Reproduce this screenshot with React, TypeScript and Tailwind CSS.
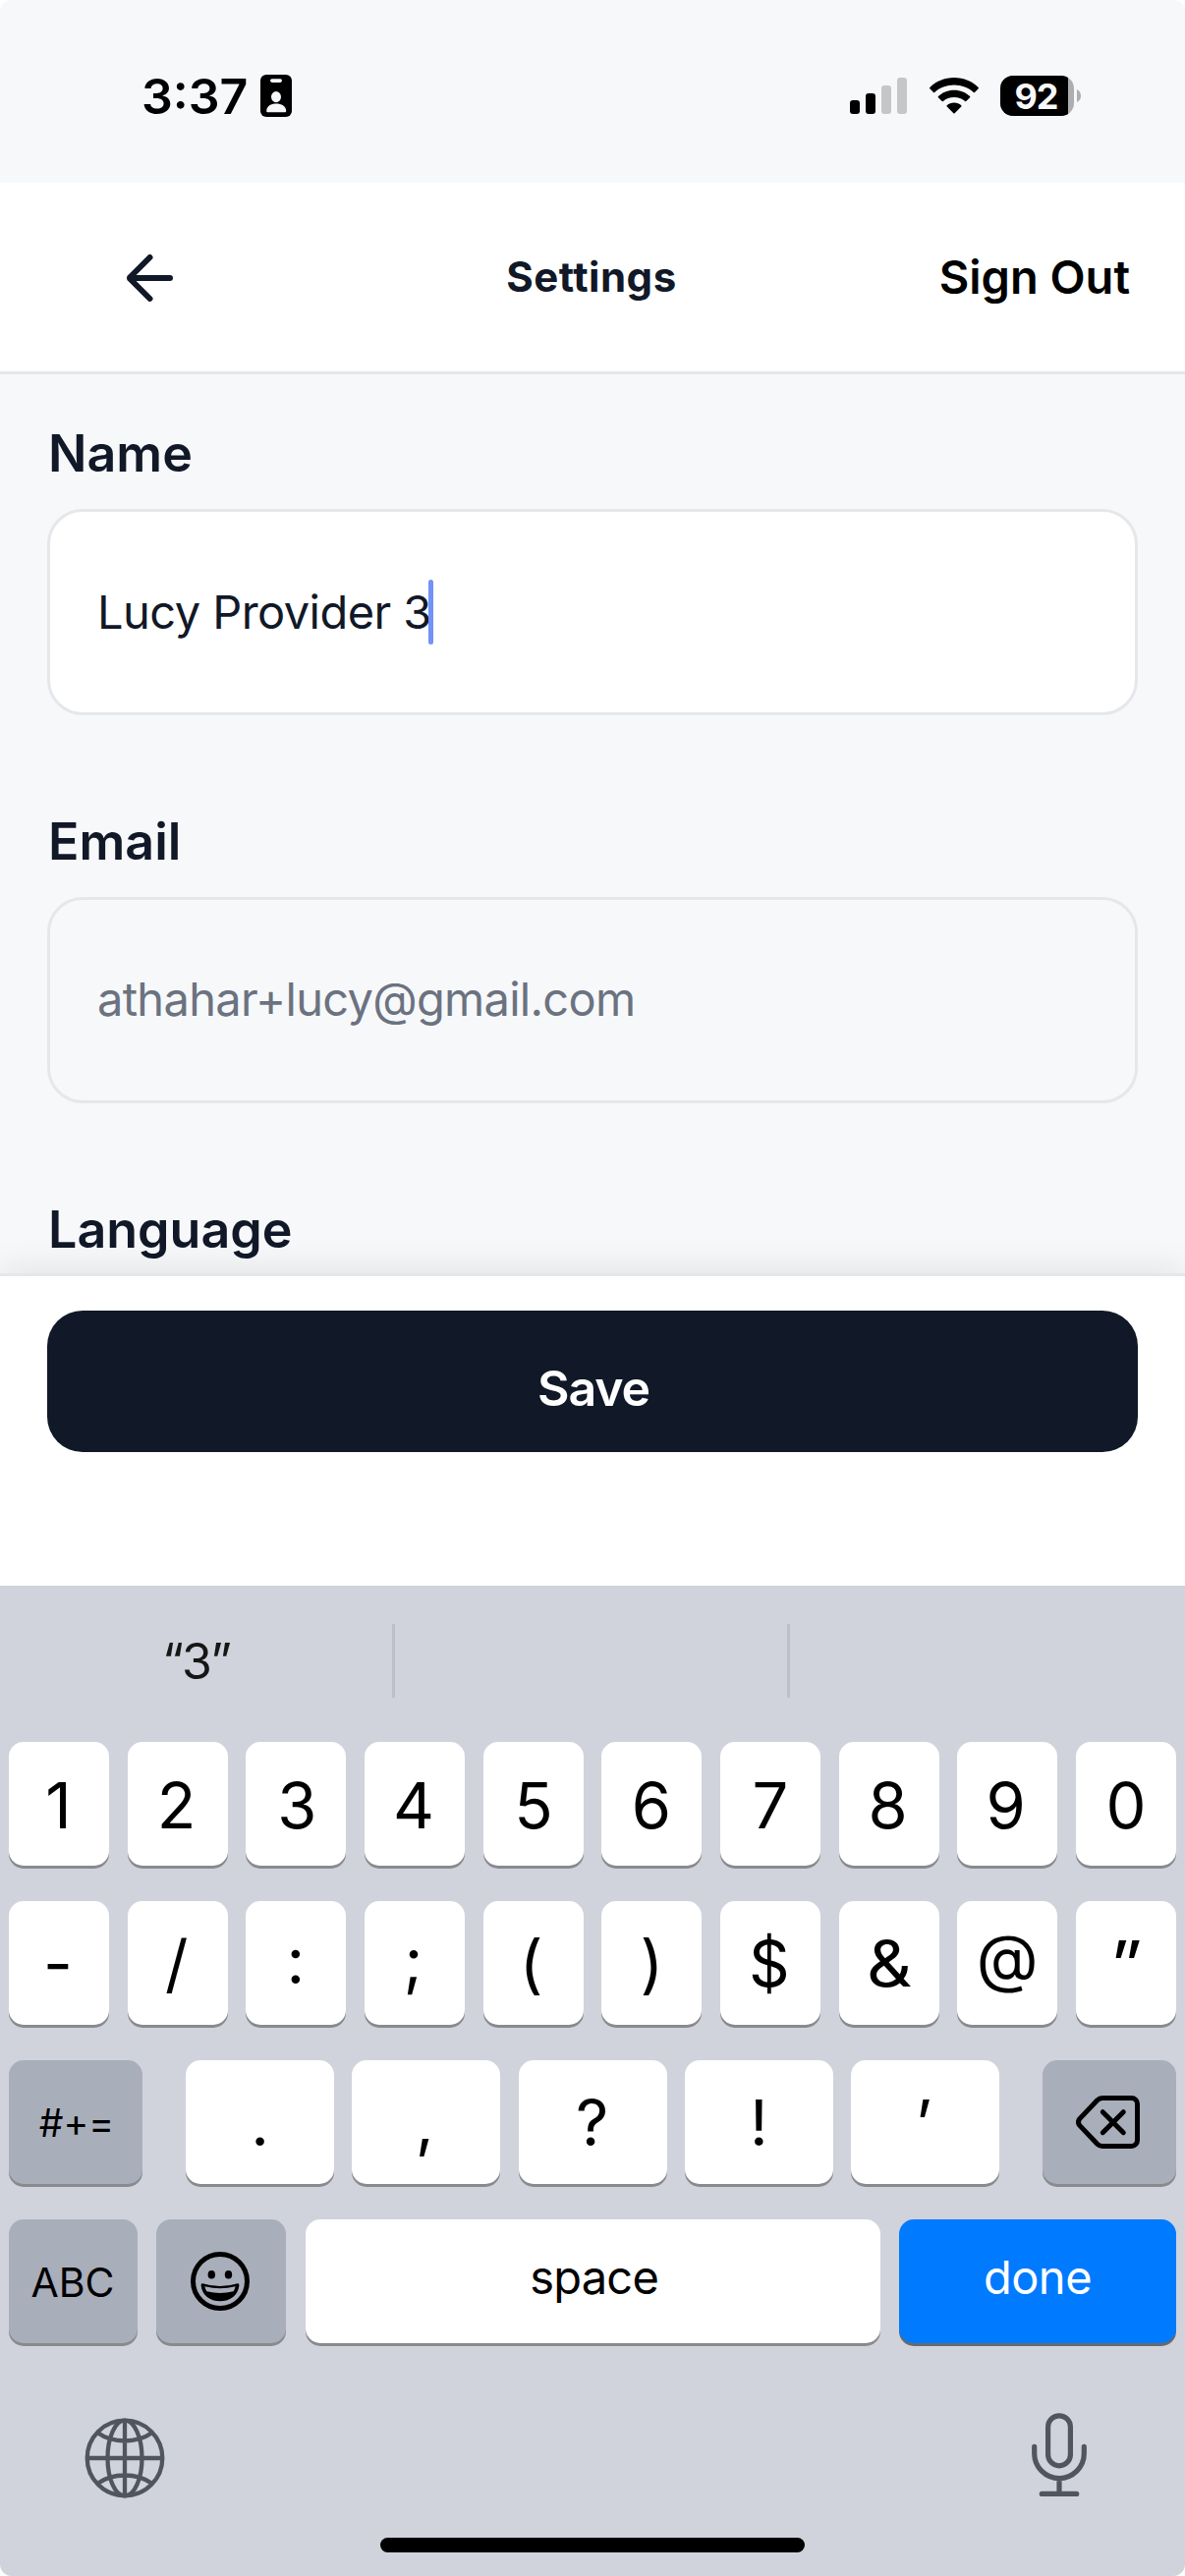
import type { ReactNode } from 'react';

function StatusBar() {
  return (
    <div className="flex h-[186px] items-center justify-between pt-[9px] pr-[106px] pl-[144px]">
      <div className="flex items-center gap-[13px]">
        <span className="text-[50px] leading-none font-semibold text-black">3:37</span>
        <svg width="32" height="43" viewBox="0 0 32 43">
          <rect width="32" height="43" rx="6" fill="#000" />
          <rect x="10" y="4.3" width="12" height="3.6" rx="1.8" fill="#f7f8fa" />
          <ellipse cx="16" cy="22.6" rx="5" ry="5.6" fill="#f7f8fa" />
          <path d="M6.2 37.2C6.2 32 11 29.6 16.1 29.6S26.2 32 26.2 37.2Q26.2 38.3 25 38.3H7.4Q6.2 38.3 6.2 37.2Z" fill="#f7f8fa" />
        </svg>
      </div>
      <div className="flex items-center">
        <svg width="58" height="37" viewBox="0 0 58 37">
          <rect x="0" y="23" width="10" height="14" rx="3" fill="#000" />
          <rect x="16" y="16" width="10" height="21" rx="3" fill="#000" />
          <rect x="32" y="8" width="10" height="29" rx="3" fill="#c5c6c8" />
          <rect x="48" y="0" width="10" height="37" rx="3" fill="#c5c6c8" />
        </svg>
        <svg className="ml-[23px]" width="50" height="37" viewBox="0 0 50 37" fill="#000">
          <path d="M25 0C34.800 0 43.500 3.800 49.700 10Q50.200 10.600 49.700 11.200L46 15Q45.400 15.500 44.800 15C39.700 10.300 32.700 7.500 25 7.500S10.300 10.300 5.200 15Q4.600 15.500 4 15L.3 11.200Q-.2 10.600 .3 10C6.500 3.800 15.200 0 25 0Z" />
          <path d="M25 12.800C31.300 12.800 37 15.200 41.100 19.100Q41.700 19.700 41.100 20.300L37.300 24Q36.700 24.600 36.100 24C33.200 21.500 29.300 20.100 25 20.100S16.800 21.500 13.900 24Q13.300 24.600 12.700 24L8.900 20.300Q8.300 19.700 8.900 19.100C13 15.200 18.700 12.800 25 12.800Z" />
          <path d="M25 25.500C27.800 25.500 30.400 26.500 32.300 28.300Q32.900 28.900 32.300 29.500L25.600 36.300Q25 36.900 24.400 36.300L17.700 29.500Q17.100 28.900 17.700 28.300C19.600 26.500 22.200 25.500 25 25.500Z" />
        </svg>
        <div className="ml-[22px] flex h-[41px] w-[75px] overflow-hidden rounded-[13px] bg-[#adaeb0]">
          <div className="flex h-full w-[69px] items-center justify-center bg-black pl-[4px] text-[36px] leading-none font-bold tracking-[-1px] text-[#f7f8fa]">
            92
          </div>
        </div>
        <svg className="ml-[3px]" width="4" height="13" viewBox="0 0 4 13">
          <path d="M0 0Q4 2 4 6.500T0 13Z" fill="#adaeb0" />
        </svg>
      </div>
    </div>
  );
}

function Header() {
  return (
    <header className="grid h-[195px] grid-cols-3 items-center border-b-[3px] border-[#e5e7eb] bg-white pr-[56px] pl-[56px]">
      <svg className="mt-[2px] ml-[71px]" width="50" height="48" viewBox="0 0 50 48" fill="none" stroke="#111827" strokeWidth="6" strokeLinecap="round" strokeLinejoin="bevel">
        <path d="M46 24H5M25.500 3L4.500 24L25.500 45" />
      </svg>
      <h1 className="pr-[2px] text-center text-[42px] leading-none font-bold tracking-[0.5px] text-[#111827]">Settings</h1>
      <span className="pb-[2px] text-right text-[47px] leading-none font-[560] text-black">Sign Out</span>
    </header>
  );
}

function Label({ children }: { children: ReactNode }) {
  return <div className="pl-[1px] text-[52px] leading-none font-semibold text-[#111827]">{children}</div>;
}

function Key({ children, className = '' }: { children: ReactNode; className?: string }) {
  return (
    <div className={`flex h-[126px] shrink-0 items-center justify-center rounded-[15px] shadow-[0_3px_0_#898a8d] ${className}`}>
      {children}
    </div>
  );
}

type Glyph = { c: string; cls?: string };

const digits: Glyph[] = [
  { c: '1', cls: 'pr-[1px]' },
  { c: '2', cls: 'pr-[2px]' },
  { c: '3', cls: 'pl-[2px]' },
  { c: '4', cls: 'pr-[2px]' },
  { c: '5', cls: 'pl-[1px]' },
  { c: '6', cls: 'pr-[1px]' },
  { c: '7' },
  { c: '8', cls: 'pr-[2px]' },
  { c: '9', cls: 'pr-[3px]' },
  { c: '0' },
];
const symbols: Glyph[] = [
  { c: '-', cls: 'pr-[2px]' },
  { c: '/', cls: 'pr-[2px]' },
  { c: ':', cls: 'pb-[6px] pr-[1px]' },
  { c: ';', cls: 'pb-[6px] pr-[3px]' },
  { c: '(', cls: 'pr-[4px]' },
  { c: ')' },
  { c: '$', cls: 'pr-[2px]' },
  { c: '&', cls: 'scale-x-110 font-[370]' },
  { c: '@', cls: 'pb-[12px] text-[61.5px]' },
  { c: '”', cls: 'scale-x-115' },
];
const marks: Glyph[] = [
  { c: '.' },
  { c: ',', cls: 'pr-[3px]' },
  { c: '?', cls: 'pr-[1px]' },
  { c: '!' },
  { c: '’', cls: 'pr-[3px]' },
];

function Keyboard() {
  return (
    <div className="flex h-[1008px] flex-col bg-[#d0d3db] text-black">
      <div className="mb-[6px] flex h-[153px] items-center">
        <div className="flex h-[75px] w-[402px] shrink-0 items-center justify-center border-r-[3px] border-[#bcbfc7] text-[50px] leading-none tracking-[-2px] text-[#161616]">
          “3”
        </div>
        <div className="h-[75px] w-[402px] shrink-0 border-r-[3px] border-[#bcbfc7]" />
        <div className="flex-1" />
      </div>

      <div className="flex flex-col gap-[36px] px-[9px]">
        <div className="flex justify-between">
          {digits.map((k) => (
            <Key key={k.c} className="w-[102px] bg-white">
              <span className={`block pt-[3px] text-[65px] leading-none ${k.cls ?? ''}`}>{k.c}</span>
            </Key>
          ))}
        </div>
        <div className="flex justify-between">
          {symbols.map((k) => (
            <Key key={k.c} className="w-[102px] bg-white">
              <span className={`block text-[65px] leading-none ${k.cls ?? ''}`}>{k.c}</span>
            </Key>
          ))}
        </div>
        <div className="flex justify-between">
          <Key className="w-[136px] bg-[#a9aebb]">
            <span className="pt-[1px] pl-[2px] text-[39px] leading-none">#+=</span>
          </Key>
          <div className="flex w-[828px] justify-between">
            {marks.map((k) => (
              <Key key={k.c} className="w-[151px] bg-white">
                <span className={`block pt-[1px] text-[65px] leading-none ${k.cls ?? ''}`}>{k.c}</span>
              </Key>
            ))}
          </div>
          <Key className="w-[136px] bg-[#a9aebb]">
            <svg className="mr-[3px]" width="65" height="54" viewBox="0 0 65 54" fill="none" stroke="#000" strokeWidth="5" strokeLinecap="round" strokeLinejoin="round">
              <path d="M27 2.500H56.500a6 6 0 0 1 6 6v37a6 6 0 0 1-6 6H27q-3 0-5.300-2.300L3.800 30.400q-2.600-3.400 0-6.800L21.700 4.800q2.300-2.300 5.300-2.300z" />
              <path d="M27.300 16.700l21 21M48.300 16.700l-21 21" />
            </svg>
          </Key>
        </div>
        <div className="flex justify-between">
          <Key className="w-[131px] bg-[#a9aebb]">
            <span className="pt-[2px] pr-[1px] text-[41px] leading-none">ABC</span>
          </Key>
          <Key className="w-[132px] bg-[#a9aebb]">
            <svg className="mr-[2px]" width="60" height="60" viewBox="0 0 60 60">
              <circle cx="30" cy="30" r="27.500" fill="none" stroke="#000" strokeWidth="5" />
              <ellipse cx="21.300" cy="23.300" rx="3.700" ry="4.300" fill="#000" />
              <ellipse cx="38.500" cy="23.300" rx="3.700" ry="4.300" fill="#000" />
              <path d="M12.300 32.200Q30 37.800 47.700 32.200Q49.600 32 49.400 34.200C48.300 44 40.500 50.300 30 50.300S11.700 44 10.600 34.200Q10.400 32 12.300 32.200Z" fill="#000" />
              <path d="M14.400 35.300Q30 39 45.600 35.300Q45 38.200 43.600 40.200Q30 43.600 16.400 40.200Q15 38.200 14.400 35.300Z" fill="#a9aebb" />
            </svg>
          </Key>
          <Key className="w-[585px] bg-white">
            <span className="pb-[10px] pl-[3px] text-[47px] leading-none tracking-[-0.8px]">space</span>
          </Key>
          <Key className="w-[282px] bg-[#007aff] shadow-[0_3px_0_#68696d]">
            <span className="pb-[10px] text-[47px] leading-none tracking-[-0.5px] text-white">done</span>
          </Key>
        </div>
      </div>

      <div className="mt-[71px] flex items-start justify-between pr-[100px] pl-[86px]">
        <svg className="mt-[5px]" width="82" height="82" viewBox="-41 -41 82 82" fill="none" stroke="#51555e" strokeWidth="4.300">
          <circle r="38.300" />
          <ellipse rx="17.500" ry="38.300" />
          <path d="M0-38V38M-38 0H38M-28-26Q-16-17.500 0-17.500T28-26M-28 26Q-16 17.500 0 17.500T28 26" />
        </svg>
        <svg width="56" height="86" viewBox="0 0 56 86" fill="none" stroke="#51555e" strokeWidth="5.200" strokeLinecap="round">
          <rect x="16.600" y="2.800" width="22.800" height="51" rx="11.400" />
          <path d="M2.700 34.300v7a25.300 25.300 0 0 0 50.600 0v-7M28 66.600V82M10.300 82.400H45.700" />
        </svg>
      </div>
      <div className="mx-auto mt-[40px] h-[15px] w-[432px] rounded-full bg-black" />
    </div>
  );
}

export default function App() {
  return (
    <div className="h-[2622px] w-[1206px] bg-white font-['Inter',sans-serif]">
      <div className="flex h-full flex-col overflow-hidden rounded-[12px] bg-[#f7f8fa]">
        <StatusBar />
        <Header />
        <main className="h-[915px] overflow-hidden px-[48px] pt-[55px]">
          <Label>Name</Label>
          <div className="mt-[30px] flex h-[210px] items-center rounded-[36px] border-[3px] border-[#e5e7eb] bg-white pl-[48px]">
            <span className="pb-[2px] text-[47px] leading-none tracking-[-0.55px] text-[#111827]">Lucy Provider 3</span>
            <span className="ml-[-3px] h-[66px] w-[5px] rounded-full bg-[#7392f7]" />
          </div>
          <div className="mt-[103px]">
            <Label>Email</Label>
          </div>
          <div className="mt-[30px] flex h-[210px] items-center rounded-[36px] border-[3px] border-[#e5e7eb] pl-[48px]">
            <span className="pb-[3px] text-[47px] leading-none tracking-[-0.7px] text-[#6b7280]">athahar+lucy@gmail.com</span>
          </div>
          <div className="mt-[103px]">
            <Label>Language</Label>
          </div>
        </main>
        <footer className="relative h-[318px] border-t-[3px] border-[#e5e7eb] bg-white px-[48px] pt-[35px] shadow-[0_-9px_30px_rgba(0,0,0,0.07)]">
          <button className="flex h-[144px] w-full items-center justify-center rounded-[36px] bg-[#111827] pt-[13px] pl-[2px] text-[50px] leading-none font-semibold tracking-[-1.1px] text-white">
            Save
          </button>
        </footer>
        <div className="relative">
          <Keyboard />
        </div>
      </div>
    </div>
  );
}
